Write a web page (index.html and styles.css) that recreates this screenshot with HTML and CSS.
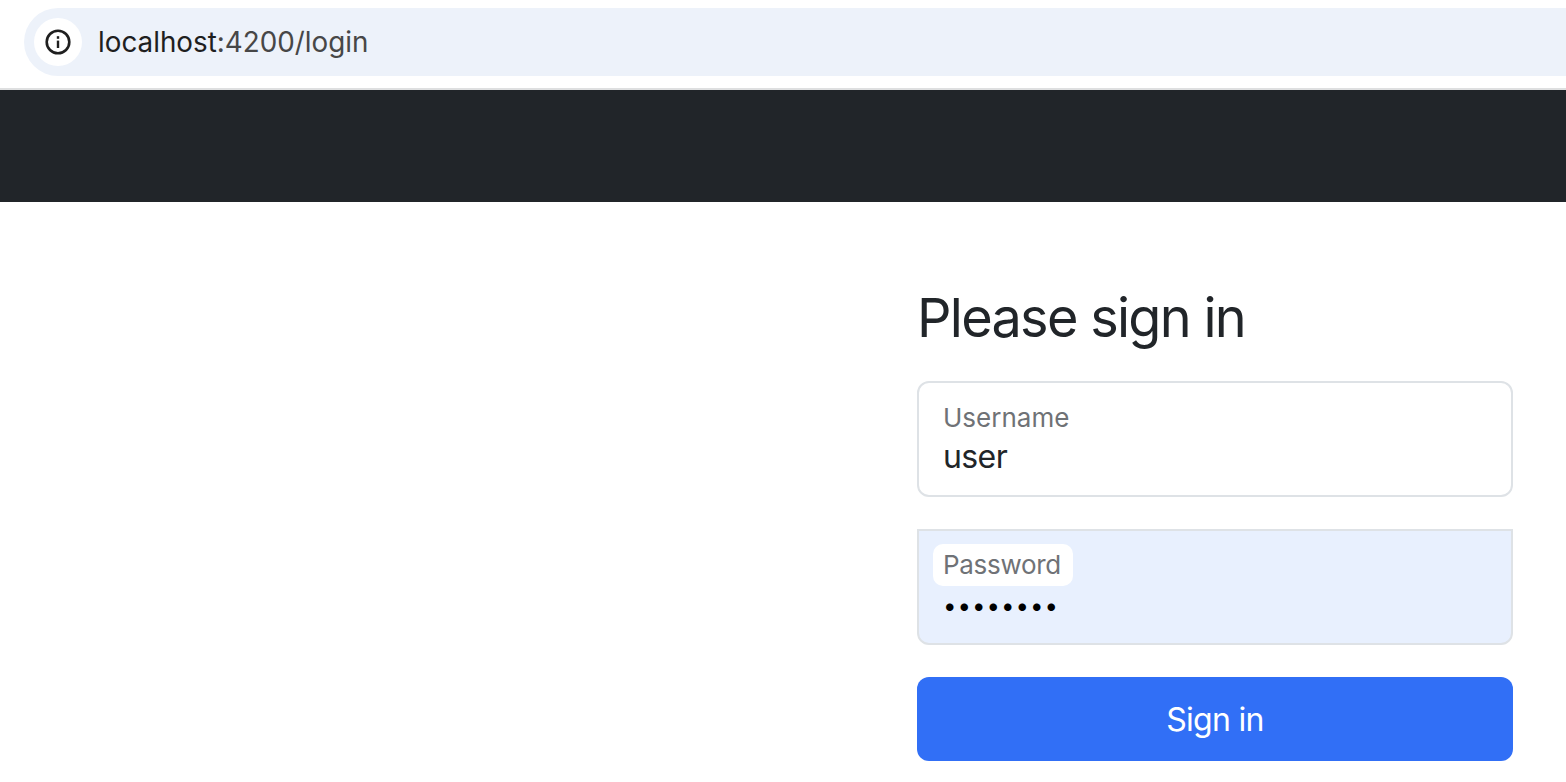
FILE: index.html
```html
<!DOCTYPE html>
<html lang="en">
<head>
    <meta charset="UTF-8">
    <meta name="viewport" content="width=device-width, initial-scale=1.0">
    <title>Please sign in</title>
    <link rel="stylesheet" href="styles.css">
</head>
<body>
    <div class="browser-bar">
        <div class="address-pill">
            <div class="site-info">
                <svg class="info-icon" viewBox="0 0 26 26" width="26" height="26" aria-hidden="true">
                    <circle cx="13" cy="13" r="11.3" fill="none" stroke="#1f1f1f" stroke-width="2.6"/>
                    <rect x="11.8" y="11.6" width="2.4" height="7.4" fill="#1f1f1f"/>
                    <rect x="11.8" y="7.2" width="2.4" height="2.6" fill="#1f1f1f"/>
                </svg>
            </div>
            <div class="address-text">localhost<span class="address-path">:4200/login</span></div>
        </div>
    </div>

    <nav class="navbar"></nav>

    <main class="page">
        <form class="sign-in-form">
            <h1>Please sign in</h1>

            <div class="field">
                <label class="field-label" for="username">Username</label>
                <input class="field-input" id="username" type="text" value="user">
            </div>

            <div class="field autofilled">
                <label class="field-label" for="password">Password</label>
                <input class="field-input" id="password" type="password" value="password">
            </div>

            <button class="submit-button" type="button">Sign in</button>
        </form>
    </main>
</body>
</html>
```

FILE: styles.css
```css
html, body {
    height: 100%;
}

body {
    margin: 0;
    overflow: hidden;
    background-color: white;
    color: #212529;
    font-family: Inter, "Liberation Sans", sans-serif;
}

.browser-bar {
    box-sizing: border-box;
    height: 90px;
    padding: 8px 0 0 24px;
    background-color: white;
    border-bottom: 2px solid #dedfe0;
}

.address-pill {
    display: flex;
    align-items: center;
    height: 68px;
    padding-left: 10px;
    background-color: #edf2fa;
    border-radius: 34px 0 0 34px;
}

.site-info {
    display: flex;
    align-items: center;
    justify-content: center;
    width: 48px;
    height: 48px;
    background-color: white;
    border-radius: 50%;
}

.address-text {
    margin-left: 16px;
    font-size: 27.8px;
    color: #1f1f1f;
}

.address-path {
    color: #474747;
}

.navbar {
    height: 112px;
    background-color: #212529;
}

.page {
    display: flex;
    justify-content: flex-end;
    padding-right: 53px;
}

.sign-in-form {
    display: flex;
    flex-direction: column;
    width: 596px;
    padding-top: 81px;
}

h1 {
    margin: 0 0 28px;
    font-size: 54px;
    font-weight: 400;
    line-height: 70px;
    letter-spacing: -1.7px;
}

.field {
    box-sizing: border-box;
    display: flex;
    flex-direction: column;
    align-items: flex-start;
    height: 116px;
    margin-bottom: 32px;
    padding: 19px 24px 0;
    background-color: white;
    border: 2px solid #dee2e6;
    border-radius: 12px;
}

.field-label {
    font-size: 26px;
    line-height: 32px;
    color: #6f7276;
}

.field-input {
    width: 100%;
    height: 38px;
    margin: 3px 0 0;
    padding: 0;
    border: none;
    outline: none;
    background: transparent;
    font-family: inherit;
    font-size: 32px;
    letter-spacing: -0.6px;
    color: #212529;
}

.autofilled {
    padding-top: 13px;
    background-color: #e8f0fe;
    border-radius: 0 0 12px 12px;
}

.autofilled .field-label {
    margin-left: -10px;
    padding: 5px 12px 5px 10px;
    background-color: white;
    border-radius: 10px;
    letter-spacing: -0.3px;
}

.autofilled .field-input {
    margin-top: 0;
    font-size: 24px;
    letter-spacing: 1px;
    color: black;
}

.submit-button {
    height: 84px;
    border: none;
    border-radius: 12px;
    background-color: #316ff6;
    color: white;
    font-family: inherit;
    font-size: 32px;
    letter-spacing: -0.7px;
}
```
